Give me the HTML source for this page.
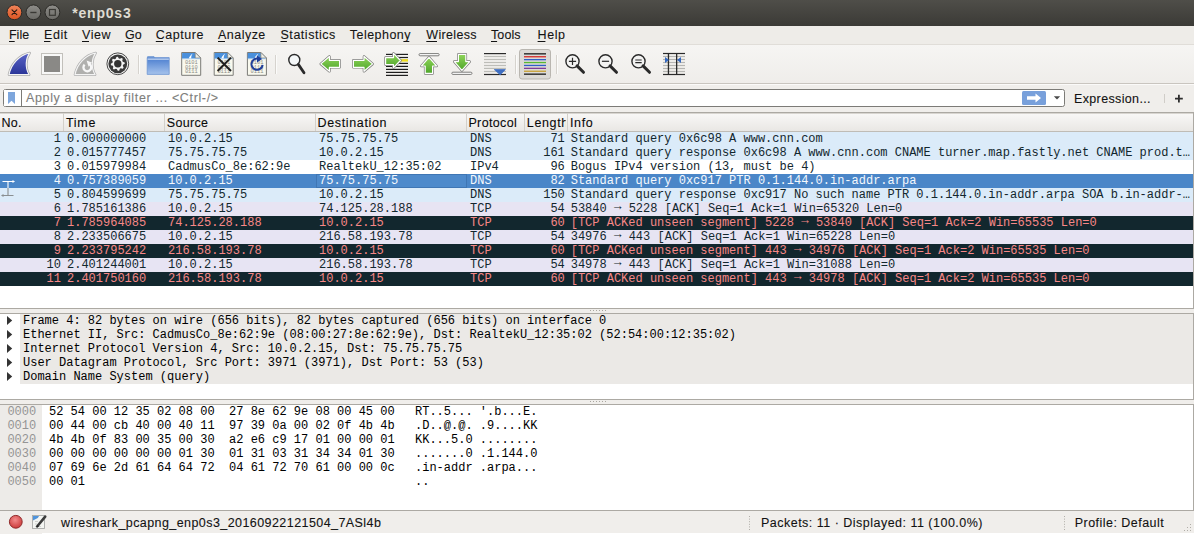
<!DOCTYPE html>
<html><head><meta charset="utf-8"><title>enp0s3</title>
<style>html,body{margin:0;padding:0;width:1194px;height:534px;overflow:hidden;background:#f0eeeb;font-family:"Liberation Sans", sans-serif;}</style>
</head><body><svg width="1194" height="534" viewBox="0 0 1194 534" style="display:block"><defs><linearGradient id="tb" x1="0" y1="0" x2="0" y2="1"><stop offset="0" stop-color="#4f4e49"/><stop offset="1" stop-color="#3b3a36"/></linearGradient><linearGradient id="hdr" x1="0" y1="0" x2="0" y2="1"><stop offset="0" stop-color="#f9f8f7"/><stop offset="1" stop-color="#e9e7e4"/></linearGradient><linearGradient id="closeg" x1="0" y1="0" x2="0" y2="1"><stop offset="0" stop-color="#f0845a"/><stop offset="1" stop-color="#dc5522"/></linearGradient><linearGradient id="btng" x1="0" y1="0" x2="0" y2="1"><stop offset="0" stop-color="#8e8d89"/><stop offset="1" stop-color="#6b6a66"/></linearGradient><radialGradient id="redg" cx="0.45" cy="0.35" r="0.65"><stop offset="0" stop-color="#f28b8b"/><stop offset="1" stop-color="#cc3b3b"/></radialGradient><linearGradient id="fin" x1="0" y1="0" x2="0" y2="1"><stop offset="0" stop-color="#5a64c8"/><stop offset="1" stop-color="#2a3598"/></linearGradient><linearGradient id="fold" x1="0" y1="0" x2="0" y2="1"><stop offset="0" stop-color="#4a7dcf"/><stop offset="1" stop-color="#a6c3ec"/></linearGradient><linearGradient id="green" x1="0" y1="0" x2="0" y2="1"><stop offset="0" stop-color="#8fd45a"/><stop offset="1" stop-color="#4ea52a"/></linearGradient><linearGradient id="tbar" x1="0" y1="0" x2="0" y2="1"><stop offset="0" stop-color="#f6f5f3"/><stop offset="1" stop-color="#efedea"/></linearGradient><clipPath id="infoclip"><rect x="567" y="132" width="624" height="160"/></clipPath><clipPath id="lenclip"><rect x="524" y="113" width="41.6" height="18"/></clipPath></defs><rect x="0" y="0" width="1194" height="534" fill="#f0eeeb" /><rect x="0" y="0" width="1194" height="26" fill="url(#tb)" /><circle cx="14.4" cy="12.3" r="7.4" fill="url(#closeg)" stroke="#2b2a27" stroke-width="1"/><path d="M12 9.9 L16.8 14.7 M16.8 9.9 L12 14.7" stroke="#2a1a12" stroke-width="1.1" stroke-linecap="round"/><circle cx="33.4" cy="12.3" r="7.4" fill="url(#btng)" stroke="#2b2a27" stroke-width="1"/><path d="M30.3 12.5 H36.5" stroke="#3a3935" stroke-width="1.4"/><circle cx="52.4" cy="12.3" r="7.4" fill="url(#btng)" stroke="#2b2a27" stroke-width="1"/><rect x="49.5" y="9.5" width="5.8" height="5.8" fill="none" stroke="#3a3935" stroke-width="1.2"/><text x="72.2" y="17.8" font-family='"Liberation Sans", sans-serif' font-size="14" font-weight="bold" fill="#dfdbd2" textLength="58.5" lengthAdjust="spacing" >*enp0s3</text><rect x="0" y="26" width="1194" height="18" fill="#eeece8" /><rect x="0" y="44" width="1194" height="1" fill="#e0ddd8" /><rect x="0" y="45" width="1194" height="38" fill="url(#tbar)" /><text x="9" y="38.8" font-family='"Liberation Sans", sans-serif' font-size="12.5" fill="#141414" stroke="#141414" stroke-width="0.1" textLength="20.1" lengthAdjust="spacing" >File</text><rect x="9.0" y="41" width="5.7" height="1" fill="#141414" /><text x="44" y="38.8" font-family='"Liberation Sans", sans-serif' font-size="12.5" fill="#141414" stroke="#141414" stroke-width="0.1" textLength="23.2" lengthAdjust="spacing" >Edit</text><rect x="44.0" y="41" width="6.4" height="1" fill="#141414" /><text x="82" y="38.8" font-family='"Liberation Sans", sans-serif' font-size="12.5" fill="#141414" stroke="#141414" stroke-width="0.1" textLength="28.5" lengthAdjust="spacing" >View</text><rect x="82.0" y="41" width="7.0" height="1" fill="#141414" /><text x="125" y="38.8" font-family='"Liberation Sans", sans-serif' font-size="12.5" fill="#141414" stroke="#141414" stroke-width="0.1" textLength="16.6" lengthAdjust="spacing" >Go</text><rect x="125.0" y="41" width="8.1" height="1" fill="#141414" /><text x="155.8" y="38.8" font-family='"Liberation Sans", sans-serif' font-size="12.5" fill="#141414" stroke="#141414" stroke-width="0.1" textLength="47.7" lengthAdjust="spacing" >Capture</text><rect x="155.8" y="41" width="7.2" height="1" fill="#141414" /><text x="218" y="38.8" font-family='"Liberation Sans", sans-serif' font-size="12.5" fill="#141414" stroke="#141414" stroke-width="0.1" textLength="47.3" lengthAdjust="spacing" >Analyze</text><rect x="218.0" y="41" width="7.0" height="1" fill="#141414" /><text x="280.5" y="38.8" font-family='"Liberation Sans", sans-serif' font-size="12.5" fill="#141414" stroke="#141414" stroke-width="0.1" textLength="54.8" lengthAdjust="spacing" >Statistics</text><rect x="280.5" y="41" width="6.4" height="1" fill="#141414" /><text x="349.8" y="38.8" font-family='"Liberation Sans", sans-serif' font-size="12.5" fill="#141414" stroke="#141414" stroke-width="0.1" textLength="60.7" lengthAdjust="spacing" >Telephony</text><rect x="403.4" y="41" width="5.9" height="1" fill="#141414" /><text x="426.3" y="38.8" font-family='"Liberation Sans", sans-serif' font-size="12.5" fill="#141414" stroke="#141414" stroke-width="0.1" textLength="50.2" lengthAdjust="spacing" >Wireless</text><rect x="426.3" y="41" width="10.7" height="1" fill="#141414" /><text x="491" y="38.8" font-family='"Liberation Sans", sans-serif' font-size="12.5" fill="#141414" stroke="#141414" stroke-width="0.1" textLength="29.6" lengthAdjust="spacing" >Tools</text><rect x="491.0" y="41" width="6.1" height="1" fill="#141414" /><text x="537.6" y="38.8" font-family='"Liberation Sans", sans-serif' font-size="12.5" fill="#141414" stroke="#141414" stroke-width="0.1" textLength="27.4" lengthAdjust="spacing" >Help</text><rect x="537.6" y="41" width="7.8" height="1" fill="#141414" /><rect x="0" y="83" width="1194" height="1" fill="#c9c5bf" /><rect x="0" y="84" width="1194" height="1" fill="#fbfaf9" /><path d="M9 74.6 C 11.2 64, 19.2 55.2, 29.6 53 C 25.6 58.5, 24.9 68, 29.1 74.6 Z" fill="#d0d0d0" stroke="#a9a9a9" stroke-width="2.6" stroke-linejoin="round"/><path d="M9 74.6 C 11.2 64, 19.2 55.2, 29.6 53 C 25.6 58.5, 24.9 68, 29.1 74.6 Z" fill="url(#fin)" stroke="#f4f4f4" stroke-width="1.2" stroke-linejoin="round"/><rect x="41.5" y="53.5" width="21" height="21" fill="#f8f8f7" stroke="#c2c0bb" stroke-width="1"/><rect x="44" y="56" width="16" height="16" fill="#8a8986" /><path d="M75 74.6 C 77.2 64, 85.2 55.2, 95.6 53 C 91.6 58.5, 90.9 68, 95.1 74.6 Z" fill="#d0d0d0" stroke="#b0b0b0" stroke-width="2.6" stroke-linejoin="round"/><path d="M75 74.6 C 77.2 64, 85.2 55.2, 95.6 53 C 91.6 58.5, 90.9 68, 95.1 74.6 Z" fill="#b0b0ae" stroke="#f4f4f4" stroke-width="1.2" stroke-linejoin="round"/><path d="M84.6 64.6 A 3.9 3.9 0 1 0 89.6 64.2" fill="none" stroke="#f7f7f7" stroke-width="2.3"/><path d="M86.6 60.6 L91.8 62.4 L88.6 66.8 Z" fill="#f7f7f7"/><circle cx="117.8" cy="63.8" r="10.9" fill="#f2f2f1" stroke="#4a4a4a" stroke-width="1"/><circle cx="117.8" cy="63.8" r="9.4" fill="#3a3a3a"/><polygon points="124.67,62.43 124.80,63.80 123.10,64.85 122.79,65.87 123.62,67.69 122.75,68.75 120.80,68.29 119.87,68.79 119.17,70.67 117.80,70.80 116.75,69.10 115.73,68.79 113.91,69.62 112.85,68.75 113.31,66.80 112.81,65.87 110.93,65.17 110.80,63.80 112.50,62.75 112.81,61.73 111.98,59.91 112.85,58.85 114.80,59.31 115.73,58.81 116.43,56.93 117.80,56.80 118.85,58.50 119.87,58.81 121.69,57.98 122.75,58.85 122.29,60.80 122.79,61.73" fill="#f4f4f4"/><circle cx="117.8" cy="63.8" r="3.7" fill="#333333"/><rect x="138" y="55" width="1" height="19" fill="#d6d3ce" /><rect x="139" y="55" width="1" height="19" fill="#fbfbfa" /><path d="M147.6 56.6 h6.4 l1 1.2 v1.5 h-7.4 z" fill="#7aa2dc" stroke="#6b93cf" stroke-width="0.7"/><path d="M147.2 57.6 h22 v16.8 h-22 z" fill="url(#fold)" stroke="#6d95d2" stroke-width="0.8"/><rect x="147.6" y="58.6" width="21.2" height="1" fill="#e8f0fb" /><path d="M181.7 52.5 h13.5 l5.5 5.5 v17.3 h-19 z" fill="#f9f9ee" stroke="#7b7b77" stroke-width="1"/><path d="M182.2 53.0 h13 l4.6 4.6 v1.2 h-17.9 z" fill="#4a90dc"/><path d="M188.7 58.8 c0.8 -2.2 2.2 -4.2 4 -5.2 c-1.2 1.6 -1.6 3.3 -1.4 5.2 z" fill="#ffffff"/><path d="M195.2 52.5 v5.5 h5.5 z" fill="#eeeee6" stroke="#7b7b77" stroke-width="0.7"/><path d="M182.2 58.8 h18" stroke="#b5d2f0" stroke-width="0.8"/><text x="184.89999999999998" y="64.1" font-family="Liberation Mono" font-size="5.4" fill="#8c8c88" letter-spacing="-0.05">0101</text><text x="184.89999999999998" y="68.5" font-family="Liberation Mono" font-size="5.4" fill="#8c8c88" letter-spacing="-0.05">0110</text><text x="184.89999999999998" y="72.9" font-family="Liberation Mono" font-size="5.4" fill="#8c8c88" letter-spacing="-0.05">0111</text><path d="M214.2 52.5 h13.5 l5.5 5.5 v17.3 h-19 z" fill="#f9f9ee" stroke="#7b7b77" stroke-width="1"/><path d="M214.7 53.0 h13 l4.6 4.6 v1.2 h-17.9 z" fill="#4a90dc"/><path d="M221.2 58.8 c0.8 -2.2 2.2 -4.2 4 -5.2 c-1.2 1.6 -1.6 3.3 -1.4 5.2 z" fill="#ffffff"/><path d="M227.7 52.5 v5.5 h5.5 z" fill="#eeeee6" stroke="#7b7b77" stroke-width="0.7"/><path d="M214.7 58.8 h18" stroke="#b5d2f0" stroke-width="0.8"/><text x="217.39999999999998" y="64.1" font-family="Liberation Mono" font-size="5.4" fill="#8c8c88" letter-spacing="-0.05">0101</text><text x="217.39999999999998" y="68.5" font-family="Liberation Mono" font-size="5.4" fill="#8c8c88" letter-spacing="-0.05">0110</text><text x="217.39999999999998" y="72.9" font-family="Liberation Mono" font-size="5.4" fill="#8c8c88" letter-spacing="-0.05">0111</text><path d="M217.6 57.6 L231 71 M231 57.6 L217.6 71" stroke="#1e1e1e" stroke-width="2"/><path d="M247.4 52.5 h13.5 l5.5 5.5 v17.3 h-19 z" fill="#f9f9ee" stroke="#7b7b77" stroke-width="1"/><path d="M247.9 53.0 h13 l4.6 4.6 v1.2 h-17.9 z" fill="#4a90dc"/><path d="M254.4 58.8 c0.8 -2.2 2.2 -4.2 4 -5.2 c-1.2 1.6 -1.6 3.3 -1.4 5.2 z" fill="#ffffff"/><path d="M260.9 52.5 v5.5 h5.5 z" fill="#eeeee6" stroke="#7b7b77" stroke-width="0.7"/><path d="M247.9 58.8 h18" stroke="#b5d2f0" stroke-width="0.8"/><text x="250.6" y="64.1" font-family="Liberation Mono" font-size="5.4" fill="#8c8c88" letter-spacing="-0.05">0101</text><text x="250.6" y="68.5" font-family="Liberation Mono" font-size="5.4" fill="#8c8c88" letter-spacing="-0.05">0110</text><text x="250.6" y="72.9" font-family="Liberation Mono" font-size="5.4" fill="#8c8c88" letter-spacing="-0.05">0111</text><path d="M262.6 64.8 A 5.6 5.6 0 1 1 258.6 58.8" fill="none" stroke="#1f3f9a" stroke-width="2"/><path d="M256.8 55.6 L262.2 58.9 L257 62.4 Z" fill="#1f3f9a"/><rect x="275" y="55" width="1" height="19" fill="#d6d3ce" /><rect x="276" y="55" width="1" height="19" fill="#fbfbfa" /><circle cx="294.3" cy="60" r="5.5" fill="#f4f7f8" stroke="#2a2a2a" stroke-width="1.4"/><path d="M298.3 64.4 L304 72.8" stroke="#2a2a2a" stroke-width="2.8" stroke-linecap="round"/><path d="M320.8 63.9 L329.4 56.5 V60.3 H339.6 V67.3 H329.4 V71.3 Z" fill="url(#green)" stroke="#7d7d7b" stroke-width="2.6" stroke-linejoin="round"/><path d="M320.8 63.9 L329.4 56.5 V60.3 H339.6 V67.3 H329.4 V71.3 Z" fill="url(#green)" stroke="#ffffff" stroke-width="1.2" stroke-linejoin="round"/><path d="M372.6 63.9 L364 56.5 V60.3 H353.4 V67.3 H364 V71.3 Z" fill="url(#green)" stroke="#7d7d7b" stroke-width="2.6" stroke-linejoin="round"/><path d="M372.6 63.9 L364 56.5 V60.3 H353.4 V67.3 H364 V71.3 Z" fill="url(#green)" stroke="#ffffff" stroke-width="1.2" stroke-linejoin="round"/><rect x="386" y="53.8" width="22" height="1.2" fill="#1e1e1e" /><rect x="386" y="56.9" width="22" height="1.2" fill="#1e1e1e" /><rect x="386" y="59.8" width="22" height="1.2" fill="#1e1e1e" /><rect x="386" y="62.8" width="22" height="1.2" fill="#1e1e1e" /><rect x="386" y="65.8" width="22" height="1.2" fill="#1e1e1e" /><rect x="386" y="68.8" width="22" height="1.2" fill="#1e1e1e" /><rect x="386" y="71.8" width="22" height="1.2" fill="#1e1e1e" /><rect x="386" y="74.8" width="22" height="1.2" fill="#1e1e1e" /><rect x="401" y="59.2" width="7" height="2.4" fill="#f1de20" /><path d="M400.4 60.5 L393.5 53.4 V57.6 H385.6 V64.6 H393.5 V67.6 Z" fill="url(#green)" stroke="#7d7d7b" stroke-width="2.6" stroke-linejoin="round"/><path d="M400.4 60.5 L393.5 53.4 V57.6 H385.6 V64.6 H393.5 V67.6 Z" fill="url(#green)" stroke="#ffffff" stroke-width="1.2" stroke-linejoin="round"/><rect x="419" y="53.6" width="20.2" height="2.2" rx="1.1" fill="#ffffff" stroke="#7d7d7b" stroke-width="1"/><path d="M429 57.4 L436.6 66 H432.6 V73.4 H425.2 V66 H421.4 Z" fill="url(#green)" stroke="#7d7d7b" stroke-width="2.6" stroke-linejoin="round"/><path d="M429 57.4 L436.6 66 H432.6 V73.4 H425.2 V66 H421.4 Z" fill="url(#green)" stroke="#ffffff" stroke-width="1.2" stroke-linejoin="round"/><rect x="451.8" y="72.2" width="20.2" height="2.2" rx="1.1" fill="#ffffff" stroke="#7d7d7b" stroke-width="1"/><path d="M461.9 70.4 L469.7 61.6 H465.8 V54.4 H458.4 V61.6 H454.3 Z" fill="url(#green)" stroke="#7d7d7b" stroke-width="2.6" stroke-linejoin="round"/><path d="M461.9 70.4 L469.7 61.6 H465.8 V54.4 H458.4 V61.6 H454.3 Z" fill="url(#green)" stroke="#ffffff" stroke-width="1.2" stroke-linejoin="round"/><rect x="484" y="53.0" width="22" height="1.2" fill="#2a2a2a" /><rect x="484" y="55.9" width="22" height="1.2" fill="#bdbdb8" /><rect x="484" y="58.9" width="22" height="1.2" fill="#bdbdb8" /><rect x="484" y="61.9" width="22" height="1.2" fill="#bdbdb8" /><rect x="484" y="64.9" width="22" height="1.2" fill="#bdbdb8" /><rect x="484" y="67.8" width="22" height="1.2" fill="#bdbdb8" /><rect x="484" y="70.9" width="22" height="1.2" fill="#bdbdb8" /><rect x="484" y="73.9" width="22" height="1.2" fill="#2a2a2a" /><path d="M494.3 69.6 H505.3 L500.2 74.8 Z" fill="#3f6fc2" stroke="#3f6fc2" stroke-width="0.8" stroke-linejoin="round"/><rect x="515" y="55" width="1" height="19" fill="#d6d3ce" /><rect x="516" y="55" width="1" height="19" fill="#fbfbfa" /><rect x="519.5" y="49.5" width="31" height="29.5" rx="2.5" fill="#dcdad6" stroke="#b9b6b0" stroke-width="1"/><rect x="524" y="53.2" width="22" height="1.3" fill="#1b1b1b" /><rect x="524" y="56.1" width="22" height="1.3" fill="#d42a2a" /><rect x="524" y="59.0" width="22" height="1.3" fill="#2f5fc9" /><rect x="524" y="61.9" width="22" height="1.3" fill="#58b832" /><rect x="524" y="64.8" width="22" height="1.3" fill="#2f5fc9" /><rect x="524" y="67.7" width="22" height="1.3" fill="#7f3c9a" /><rect x="524" y="70.6" width="22" height="1.3" fill="#c8a032" /><rect x="524" y="73.5" width="22" height="1.3" fill="#1b1b1b" /><rect x="556" y="55" width="1" height="19" fill="#d6d3ce" /><rect x="557" y="55" width="1" height="19" fill="#fbfbfa" /><circle cx="572.5" cy="61.3" r="6.6" fill="#f3f3f2" stroke="#2a2a2a" stroke-width="1.4"/><path d="M577.1 65.89999999999999 L583.5 72.3" stroke="#2a2a2a" stroke-width="3" stroke-linecap="round"/><path d="M568.9 61.3 H576.1 M572.5 57.699999999999996 V64.89999999999999" stroke="#2a2a2a" stroke-width="1.2"/><circle cx="605.5" cy="61.3" r="6.6" fill="#f3f3f2" stroke="#2a2a2a" stroke-width="1.4"/><path d="M610.1 65.89999999999999 L616.5 72.3" stroke="#2a2a2a" stroke-width="3" stroke-linecap="round"/><path d="M601.9 61.3 H609.1" stroke="#2a2a2a" stroke-width="1.2"/><circle cx="638.5" cy="61.3" r="6.6" fill="#f3f3f2" stroke="#2a2a2a" stroke-width="1.4"/><path d="M643.1 65.89999999999999 L649.5 72.3" stroke="#2a2a2a" stroke-width="3" stroke-linecap="round"/><path d="M635.3 60.0 H641.7 M635.3 62.599999999999994 H641.7" stroke="#2a2a2a" stroke-width="1.1"/><rect x="663" y="52.9" width="22" height="1.2" fill="#2a2a2a" /><rect x="663" y="55.9" width="22" height="1.2" fill="#b5b5b2" /><rect x="663" y="58.9" width="22" height="1.2" fill="#b5b5b2" /><rect x="663" y="61.9" width="22" height="1.2" fill="#b5b5b2" /><rect x="663" y="64.9" width="22" height="1.2" fill="#b5b5b2" /><rect x="663" y="67.9" width="22" height="1.2" fill="#b5b5b2" /><rect x="663" y="70.9" width="22" height="1.2" fill="#b5b5b2" /><rect x="663" y="73.9" width="22" height="1.2" fill="#2a2a2a" /><rect x="667.8" y="53" width="1.3" height="22" fill="#2a2a2a" /><rect x="676" y="53" width="1.3" height="22" fill="#2a2a2a" /><path d="M665 57 L669 60 L665 63 Z" fill="#3468c0"/><path d="M681 57 L677 60 L681 63 Z" fill="#3468c0"/><rect x="3.5" y="89.5" width="1061" height="17" rx="2" fill="#ffffff" stroke="#7c7b77" stroke-width="1"/><rect x="4" y="90" width="17" height="16" fill="#ffffff" /><rect x="21" y="90" width="1" height="16" fill="#7c7b77" /><path d="M8 92 H15 V104 L11.5 100.8 L8 104 Z" fill="#7ea6dc"/><text x="26" y="101.7" font-family='"Liberation Sans", sans-serif' font-size="12.5" fill="#7e7e7c" stroke="#7e7e7c" stroke-width="0.1" textLength="192.1" lengthAdjust="spacing" >Apply a display filter ... &lt;Ctrl-/&gt;</text><rect x="1022" y="91" width="24" height="14" rx="1.5" fill="#78a0db"/><path d="M1027 96.2 H1035.5 V93.4 L1041 98 L1035.5 102.6 V99.8 H1027 Z" fill="#ffffff"/><path d="M1053.8 96.2 H1060.2 L1057 99.6 Z" fill="#4a4a4a"/><text x="1074" y="102.5" font-family='"Liberation Sans", sans-serif' font-size="12.5" fill="#121212" stroke="#121212" stroke-width="0.1" textLength="76.6" lengthAdjust="spacing" >Expression...</text><rect x="1164" y="94" width="1" height="9" fill="#d0cdc8" /><path d="M1178.9 94.8 V102.6 M1175 98.7 H1182.8" stroke="#2e2e2e" stroke-width="1.8"/><rect x="0" y="112" width="1194" height="1" fill="#aca9a3" /><rect x="1193" y="112" width="1" height="197" fill="#aca9a3" /><rect x="0" y="113" width="1193" height="18" fill="url(#hdr)" /><rect x="0" y="113" width="1193" height="1" fill="#d8d5d0" /><rect x="0" y="131" width="1193" height="1" fill="#bfbcb6" /><rect x="0" y="132" width="1193" height="176" fill="#ffffff" /><rect x="0" y="308" width="1194" height="1" fill="#aca9a3" /><rect x="63" y="113" width="1" height="18" fill="#d3d0ca" /><rect x="164" y="113" width="1" height="18" fill="#d3d0ca" /><rect x="315" y="113" width="1" height="18" fill="#d3d0ca" /><rect x="466" y="113" width="1" height="18" fill="#d3d0ca" /><rect x="524" y="113" width="1" height="18" fill="#d3d0ca" /><rect x="567" y="113" width="1" height="18" fill="#d3d0ca" /><text x="1.5" y="127" font-family='"Liberation Sans", sans-serif' font-size="12.5" fill="#0a0a0a" stroke="#0a0a0a" stroke-width="0.1" textLength="19.9" lengthAdjust="spacing" >No.</text><text x="66" y="127" font-family='"Liberation Sans", sans-serif' font-size="12.5" fill="#0a0a0a" stroke="#0a0a0a" stroke-width="0.1" textLength="29.4" lengthAdjust="spacing" >Time</text><text x="166.8" y="127" font-family='"Liberation Sans", sans-serif' font-size="12.5" fill="#0a0a0a" stroke="#0a0a0a" stroke-width="0.1" textLength="41.2" lengthAdjust="spacing" >Source</text><text x="317.6" y="127" font-family='"Liberation Sans", sans-serif' font-size="12.5" fill="#0a0a0a" stroke="#0a0a0a" stroke-width="0.1" textLength="68.9" lengthAdjust="spacing" >Destination</text><text x="468.4" y="127" font-family='"Liberation Sans", sans-serif' font-size="12.5" fill="#0a0a0a" stroke="#0a0a0a" stroke-width="0.1" textLength="48.4" lengthAdjust="spacing" >Protocol</text><text x="570" y="127" font-family='"Liberation Sans", sans-serif' font-size="12.5" fill="#0a0a0a" stroke="#0a0a0a" stroke-width="0.1" textLength="22.7" lengthAdjust="spacing" >Info</text><text x="526.8" y="127" font-family='"Liberation Sans", sans-serif' font-size="12.5" fill="#0a0a0a" stroke="#0a0a0a" stroke-width="0.1" textLength="41.4" lengthAdjust="spacing" clip-path="url(#lenclip)">Length</text><rect x="0" y="132" width="1193" height="14" fill="#dbebf9" /><text x="61" y="142.2" font-family='"Liberation Mono", monospace' font-size="12" fill="#12272e" text-anchor="end" xml:space="preserve">1</text><text x="67" y="142.2" font-family='"Liberation Mono", monospace' font-size="12" fill="#12272e" xml:space="preserve">0.000000000</text><text x="168" y="142.2" font-family='"Liberation Mono", monospace' font-size="12" fill="#12272e" xml:space="preserve">10.0.2.15</text><text x="319" y="142.2" font-family='"Liberation Mono", monospace' font-size="12" fill="#12272e" xml:space="preserve">75.75.75.75</text><text x="470" y="142.2" font-family='"Liberation Mono", monospace' font-size="12" fill="#12272e" xml:space="preserve">DNS</text><text x="564.8" y="142.2" font-family='"Liberation Mono", monospace' font-size="12" fill="#12272e" text-anchor="end" xml:space="preserve">71</text><text x="570.7" y="142.2" font-family='"Liberation Mono", monospace' font-size="12" fill="#12272e" clip-path="url(#infoclip)" xml:space="preserve">Standard query 0x6c98 A www.cnn.com</text><rect x="0" y="146" width="1193" height="14" fill="#dbebf9" /><text x="61" y="156.2" font-family='"Liberation Mono", monospace' font-size="12" fill="#12272e" text-anchor="end" xml:space="preserve">2</text><text x="67" y="156.2" font-family='"Liberation Mono", monospace' font-size="12" fill="#12272e" xml:space="preserve">0.015777457</text><text x="168" y="156.2" font-family='"Liberation Mono", monospace' font-size="12" fill="#12272e" xml:space="preserve">75.75.75.75</text><text x="319" y="156.2" font-family='"Liberation Mono", monospace' font-size="12" fill="#12272e" xml:space="preserve">10.0.2.15</text><text x="470" y="156.2" font-family='"Liberation Mono", monospace' font-size="12" fill="#12272e" xml:space="preserve">DNS</text><text x="564.8" y="156.2" font-family='"Liberation Mono", monospace' font-size="12" fill="#12272e" text-anchor="end" xml:space="preserve">161</text><text x="570.7" y="156.2" font-family='"Liberation Mono", monospace' font-size="12" fill="#12272e" clip-path="url(#infoclip)" xml:space="preserve">Standard query response 0x6c98 A www.cnn.com CNAME turner.map.fastly.net CNAME prod.t…</text><rect x="0" y="160" width="1193" height="14" fill="#ffffff" /><text x="61" y="170.2" font-family='"Liberation Mono", monospace' font-size="12" fill="#12272e" text-anchor="end" xml:space="preserve">3</text><text x="67" y="170.2" font-family='"Liberation Mono", monospace' font-size="12" fill="#12272e" xml:space="preserve">0.015979984</text><text x="168" y="170.2" font-family='"Liberation Mono", monospace' font-size="12" fill="#12272e" xml:space="preserve">CadmusCo_8e:62:9e</text><text x="319" y="170.2" font-family='"Liberation Mono", monospace' font-size="12" fill="#12272e" xml:space="preserve">RealtekU_12:35:02</text><text x="470" y="170.2" font-family='"Liberation Mono", monospace' font-size="12" fill="#12272e" xml:space="preserve">IPv4</text><text x="564.8" y="170.2" font-family='"Liberation Mono", monospace' font-size="12" fill="#12272e" text-anchor="end" xml:space="preserve">96</text><text x="570.7" y="170.2" font-family='"Liberation Mono", monospace' font-size="12" fill="#12272e" clip-path="url(#infoclip)" xml:space="preserve">Bogus IPv4 version (13, must be 4)</text><rect x="0" y="174" width="1193" height="14" fill="#4a86c8" /><rect x="316.5" y="174.5" width="150" height="13" fill="#4e8acb" stroke="#3f76b4" stroke-width="1"/><text x="61" y="184.2" font-family='"Liberation Mono", monospace' font-size="12" fill="#f4f8fd" text-anchor="end" xml:space="preserve">4</text><text x="67" y="184.2" font-family='"Liberation Mono", monospace' font-size="12" fill="#f4f8fd" xml:space="preserve">0.757389059</text><text x="168" y="184.2" font-family='"Liberation Mono", monospace' font-size="12" fill="#f4f8fd" xml:space="preserve">10.0.2.15</text><text x="319" y="184.2" font-family='"Liberation Mono", monospace' font-size="12" fill="#f4f8fd" xml:space="preserve">75.75.75.75</text><text x="470" y="184.2" font-family='"Liberation Mono", monospace' font-size="12" fill="#f4f8fd" xml:space="preserve">DNS</text><text x="564.8" y="184.2" font-family='"Liberation Mono", monospace' font-size="12" fill="#f4f8fd" text-anchor="end" xml:space="preserve">82</text><text x="570.7" y="184.2" font-family='"Liberation Mono", monospace' font-size="12" fill="#f4f8fd" clip-path="url(#infoclip)" xml:space="preserve">Standard query 0xc917 PTR 0.1.144.0.in-addr.arpa</text><rect x="0" y="188" width="1193" height="14" fill="#dbebf9" /><text x="61" y="198.2" font-family='"Liberation Mono", monospace' font-size="12" fill="#12272e" text-anchor="end" xml:space="preserve">5</text><text x="67" y="198.2" font-family='"Liberation Mono", monospace' font-size="12" fill="#12272e" xml:space="preserve">0.804599699</text><text x="168" y="198.2" font-family='"Liberation Mono", monospace' font-size="12" fill="#12272e" xml:space="preserve">75.75.75.75</text><text x="319" y="198.2" font-family='"Liberation Mono", monospace' font-size="12" fill="#12272e" xml:space="preserve">10.0.2.15</text><text x="470" y="198.2" font-family='"Liberation Mono", monospace' font-size="12" fill="#12272e" xml:space="preserve">DNS</text><text x="564.8" y="198.2" font-family='"Liberation Mono", monospace' font-size="12" fill="#12272e" text-anchor="end" xml:space="preserve">150</text><text x="570.7" y="198.2" font-family='"Liberation Mono", monospace' font-size="12" fill="#12272e" clip-path="url(#infoclip)" xml:space="preserve">Standard query response 0xc917 No such name PTR 0.1.144.0.in-addr.arpa SOA b.in-addr-…</text><rect x="0" y="202" width="1193" height="14" fill="#e7e4f3" /><text x="61" y="212.2" font-family='"Liberation Mono", monospace' font-size="12" fill="#12272e" text-anchor="end" xml:space="preserve">6</text><text x="67" y="212.2" font-family='"Liberation Mono", monospace' font-size="12" fill="#12272e" xml:space="preserve">1.785161386</text><text x="168" y="212.2" font-family='"Liberation Mono", monospace' font-size="12" fill="#12272e" xml:space="preserve">10.0.2.15</text><text x="319" y="212.2" font-family='"Liberation Mono", monospace' font-size="12" fill="#12272e" xml:space="preserve">74.125.28.188</text><text x="470" y="212.2" font-family='"Liberation Mono", monospace' font-size="12" fill="#12272e" xml:space="preserve">TCP</text><text x="564.8" y="212.2" font-family='"Liberation Mono", monospace' font-size="12" fill="#12272e" text-anchor="end" xml:space="preserve">54</text><text x="570.7" y="212.2" font-family='"Liberation Mono", monospace' font-size="12" fill="#12272e" clip-path="url(#infoclip)" xml:space="preserve">53840 <tspan dy="-2" font-size="12.6">→</tspan><tspan dy="2"> 5228 [ACK] Seq=1 Ack=1 Win=65320 Len=0</tspan></text><rect x="0" y="216" width="1193" height="14" fill="#12272e" /><text x="61" y="226.2" font-family='"Liberation Mono", monospace' font-size="12" fill="#f78787" text-anchor="end" xml:space="preserve">7</text><text x="67" y="226.2" font-family='"Liberation Mono", monospace' font-size="12" fill="#f78787" xml:space="preserve">1.785964085</text><text x="168" y="226.2" font-family='"Liberation Mono", monospace' font-size="12" fill="#f78787" xml:space="preserve">74.125.28.188</text><text x="319" y="226.2" font-family='"Liberation Mono", monospace' font-size="12" fill="#f78787" xml:space="preserve">10.0.2.15</text><text x="470" y="226.2" font-family='"Liberation Mono", monospace' font-size="12" fill="#f78787" xml:space="preserve">TCP</text><text x="564.8" y="226.2" font-family='"Liberation Mono", monospace' font-size="12" fill="#f78787" text-anchor="end" xml:space="preserve">60</text><text x="570.7" y="226.2" font-family='"Liberation Mono", monospace' font-size="12" fill="#f78787" clip-path="url(#infoclip)" xml:space="preserve">[TCP ACKed unseen segment] 5228 <tspan dy="-2" font-size="12.6">→</tspan><tspan dy="2"> 53840 [ACK] Seq=1 Ack=2 Win=65535 Len=0</tspan></text><rect x="0" y="230" width="1193" height="14" fill="#e7e4f3" /><text x="61" y="240.2" font-family='"Liberation Mono", monospace' font-size="12" fill="#12272e" text-anchor="end" xml:space="preserve">8</text><text x="67" y="240.2" font-family='"Liberation Mono", monospace' font-size="12" fill="#12272e" xml:space="preserve">2.233506675</text><text x="168" y="240.2" font-family='"Liberation Mono", monospace' font-size="12" fill="#12272e" xml:space="preserve">10.0.2.15</text><text x="319" y="240.2" font-family='"Liberation Mono", monospace' font-size="12" fill="#12272e" xml:space="preserve">216.58.193.78</text><text x="470" y="240.2" font-family='"Liberation Mono", monospace' font-size="12" fill="#12272e" xml:space="preserve">TCP</text><text x="564.8" y="240.2" font-family='"Liberation Mono", monospace' font-size="12" fill="#12272e" text-anchor="end" xml:space="preserve">54</text><text x="570.7" y="240.2" font-family='"Liberation Mono", monospace' font-size="12" fill="#12272e" clip-path="url(#infoclip)" xml:space="preserve">34976 <tspan dy="-2" font-size="12.6">→</tspan><tspan dy="2"> 443 [ACK] Seq=1 Ack=1 Win=65228 Len=0</tspan></text><rect x="0" y="244" width="1193" height="14" fill="#12272e" /><text x="61" y="254.2" font-family='"Liberation Mono", monospace' font-size="12" fill="#f78787" text-anchor="end" xml:space="preserve">9</text><text x="67" y="254.2" font-family='"Liberation Mono", monospace' font-size="12" fill="#f78787" xml:space="preserve">2.233795242</text><text x="168" y="254.2" font-family='"Liberation Mono", monospace' font-size="12" fill="#f78787" xml:space="preserve">216.58.193.78</text><text x="319" y="254.2" font-family='"Liberation Mono", monospace' font-size="12" fill="#f78787" xml:space="preserve">10.0.2.15</text><text x="470" y="254.2" font-family='"Liberation Mono", monospace' font-size="12" fill="#f78787" xml:space="preserve">TCP</text><text x="564.8" y="254.2" font-family='"Liberation Mono", monospace' font-size="12" fill="#f78787" text-anchor="end" xml:space="preserve">60</text><text x="570.7" y="254.2" font-family='"Liberation Mono", monospace' font-size="12" fill="#f78787" clip-path="url(#infoclip)" xml:space="preserve">[TCP ACKed unseen segment] 443 <tspan dy="-2" font-size="12.6">→</tspan><tspan dy="2"> 34976 [ACK] Seq=1 Ack=2 Win=65535 Len=0</tspan></text><rect x="0" y="258" width="1193" height="14" fill="#e7e4f3" /><text x="61" y="268.2" font-family='"Liberation Mono", monospace' font-size="12" fill="#12272e" text-anchor="end" xml:space="preserve">10</text><text x="67" y="268.2" font-family='"Liberation Mono", monospace' font-size="12" fill="#12272e" xml:space="preserve">2.401244001</text><text x="168" y="268.2" font-family='"Liberation Mono", monospace' font-size="12" fill="#12272e" xml:space="preserve">10.0.2.15</text><text x="319" y="268.2" font-family='"Liberation Mono", monospace' font-size="12" fill="#12272e" xml:space="preserve">216.58.193.78</text><text x="470" y="268.2" font-family='"Liberation Mono", monospace' font-size="12" fill="#12272e" xml:space="preserve">TCP</text><text x="564.8" y="268.2" font-family='"Liberation Mono", monospace' font-size="12" fill="#12272e" text-anchor="end" xml:space="preserve">54</text><text x="570.7" y="268.2" font-family='"Liberation Mono", monospace' font-size="12" fill="#12272e" clip-path="url(#infoclip)" xml:space="preserve">34978 <tspan dy="-2" font-size="12.6">→</tspan><tspan dy="2"> 443 [ACK] Seq=1 Ack=1 Win=31088 Len=0</tspan></text><rect x="0" y="272" width="1193" height="14" fill="#12272e" /><text x="61" y="282.2" font-family='"Liberation Mono", monospace' font-size="12" fill="#f78787" text-anchor="end" xml:space="preserve">11</text><text x="67" y="282.2" font-family='"Liberation Mono", monospace' font-size="12" fill="#f78787" xml:space="preserve">2.401750160</text><text x="168" y="282.2" font-family='"Liberation Mono", monospace' font-size="12" fill="#f78787" xml:space="preserve">216.58.193.78</text><text x="319" y="282.2" font-family='"Liberation Mono", monospace' font-size="12" fill="#f78787" xml:space="preserve">10.0.2.15</text><text x="470" y="282.2" font-family='"Liberation Mono", monospace' font-size="12" fill="#f78787" xml:space="preserve">TCP</text><text x="564.8" y="282.2" font-family='"Liberation Mono", monospace' font-size="12" fill="#f78787" text-anchor="end" xml:space="preserve">60</text><text x="570.7" y="282.2" font-family='"Liberation Mono", monospace' font-size="12" fill="#f78787" clip-path="url(#infoclip)" xml:space="preserve">[TCP ACKed unseen segment] 443 <tspan dy="-2" font-size="12.6">→</tspan><tspan dy="2"> 34978 [ACK] Seq=1 Ack=2 Win=65535 Len=0</tspan></text><path d="M2 149.5 H13.5 M8 149.5 V160 M8 160 H2" stroke="#f4f8fd" stroke-width="0" /><path d="M8 188 V195.5 M3 195.5 H13.5" stroke="#8a8f92" stroke-width="1.1" fill="none"/><path d="M3.5 194 L1 195.5 L3.5 197 Z" fill="#8a8f92"/><path d="M2.5 181.5 H13 M8 181.5 V188" stroke="#ffffff" stroke-width="1.1" fill="none"/><path d="M12.5 180 L15 181.5 L12.5 183 Z" fill="#ffffff"/><rect x="0" y="309" width="1194" height="4" fill="#f0eeeb" /><rect x="590" y="310" width="1" height="1" fill="#a9a6a0" /><rect x="593" y="310" width="1" height="1" fill="#a9a6a0" /><rect x="596" y="310" width="1" height="1" fill="#a9a6a0" /><rect x="599" y="310" width="1" height="1" fill="#a9a6a0" /><rect x="602" y="310" width="1" height="1" fill="#a9a6a0" /><rect x="605" y="310" width="1" height="1" fill="#a9a6a0" /><rect x="0" y="313" width="1194" height="1" fill="#aca9a3" /><rect x="0" y="314" width="1193" height="85" fill="#ffffff" /><rect x="1193" y="313" width="1" height="87" fill="#aca9a3" /><rect x="20" y="314" width="1173" height="70" fill="#ebe9e6" /><path d="M7 316 L12.2 320.5 L7 325 Z" fill="#333333"/><text x="23.0" y="324" font-family='"Liberation Mono", monospace' font-size="12" fill="#000000" xml:space="preserve">Frame 4: 82 bytes on wire (656 bits), 82 bytes captured (656 bits) on interface 0</text><path d="M7 330 L12.2 334.5 L7 339 Z" fill="#333333"/><text x="23.0" y="338" font-family='"Liberation Mono", monospace' font-size="12" fill="#000000" xml:space="preserve">Ethernet II, Src: CadmusCo_8e:62:9e (08:00:27:8e:62:9e), Dst: RealtekU_12:35:02 (52:54:00:12:35:02)</text><path d="M7 344 L12.2 348.5 L7 353 Z" fill="#333333"/><text x="23.0" y="352" font-family='"Liberation Mono", monospace' font-size="12" fill="#000000" xml:space="preserve">Internet Protocol Version 4, Src: 10.0.2.15, Dst: 75.75.75.75</text><path d="M7 358 L12.2 362.5 L7 367 Z" fill="#333333"/><text x="23.0" y="366" font-family='"Liberation Mono", monospace' font-size="12" fill="#000000" xml:space="preserve">User Datagram Protocol, Src Port: 3971 (3971), Dst Port: 53 (53)</text><path d="M7 372 L12.2 376.5 L7 381 Z" fill="#333333"/><text x="23.0" y="380" font-family='"Liberation Mono", monospace' font-size="12" fill="#000000" xml:space="preserve">Domain Name System (query)</text><rect x="0" y="399" width="1194" height="1" fill="#aca9a3" /><rect x="0" y="400" width="1194" height="4" fill="#f0eeeb" /><rect x="590" y="401" width="1" height="1" fill="#a9a6a0" /><rect x="593" y="401" width="1" height="1" fill="#a9a6a0" /><rect x="596" y="401" width="1" height="1" fill="#a9a6a0" /><rect x="599" y="401" width="1" height="1" fill="#a9a6a0" /><rect x="602" y="401" width="1" height="1" fill="#a9a6a0" /><rect x="605" y="401" width="1" height="1" fill="#a9a6a0" /><rect x="0" y="404" width="1194" height="1" fill="#aca9a3" /><rect x="0" y="405" width="1193" height="105" fill="#ffffff" /><rect x="1193" y="404" width="1" height="107" fill="#aca9a3" /><rect x="0" y="405" width="42" height="105" fill="#edebe8" /><text x="7.4" y="415" font-family='"Liberation Mono", monospace' font-size="12" fill="#959595" xml:space="preserve">0000</text><text x="49" y="415" font-family='"Liberation Mono", monospace' font-size="12" fill="#000000" xml:space="preserve">52 54 00 12 35 02 08 00  27 8e 62 9e 08 00 45 00</text><text x="415" y="415" font-family='"Liberation Mono", monospace' font-size="12" fill="#000000" xml:space="preserve">RT..5... &#x27;.b...E.</text><text x="7.4" y="429" font-family='"Liberation Mono", monospace' font-size="12" fill="#959595" xml:space="preserve">0010</text><text x="49" y="429" font-family='"Liberation Mono", monospace' font-size="12" fill="#000000" xml:space="preserve">00 44 00 cb 40 00 40 11  97 39 0a 00 02 0f 4b 4b</text><text x="415" y="429" font-family='"Liberation Mono", monospace' font-size="12" fill="#000000" xml:space="preserve">.D..@.@. .9....KK</text><text x="7.4" y="443" font-family='"Liberation Mono", monospace' font-size="12" fill="#959595" xml:space="preserve">0020</text><text x="49" y="443" font-family='"Liberation Mono", monospace' font-size="12" fill="#000000" xml:space="preserve">4b 4b 0f 83 00 35 00 30  a2 e6 c9 17 01 00 00 01</text><text x="415" y="443" font-family='"Liberation Mono", monospace' font-size="12" fill="#000000" xml:space="preserve">KK...5.0 ........</text><text x="7.4" y="457" font-family='"Liberation Mono", monospace' font-size="12" fill="#959595" xml:space="preserve">0030</text><text x="49" y="457" font-family='"Liberation Mono", monospace' font-size="12" fill="#000000" xml:space="preserve">00 00 00 00 00 00 01 30  01 31 03 31 34 34 01 30</text><text x="415" y="457" font-family='"Liberation Mono", monospace' font-size="12" fill="#000000" xml:space="preserve">.......0 .1.144.0</text><text x="7.4" y="471" font-family='"Liberation Mono", monospace' font-size="12" fill="#959595" xml:space="preserve">0040</text><text x="49" y="471" font-family='"Liberation Mono", monospace' font-size="12" fill="#000000" xml:space="preserve">07 69 6e 2d 61 64 64 72  04 61 72 70 61 00 00 0c</text><text x="415" y="471" font-family='"Liberation Mono", monospace' font-size="12" fill="#000000" xml:space="preserve">.in-addr .arpa...</text><text x="7.4" y="485" font-family='"Liberation Mono", monospace' font-size="12" fill="#959595" xml:space="preserve">0050</text><text x="49" y="485" font-family='"Liberation Mono", monospace' font-size="12" fill="#000000" xml:space="preserve">00 01</text><text x="415" y="485" font-family='"Liberation Mono", monospace' font-size="12" fill="#000000" xml:space="preserve">..</text><rect x="0" y="510" width="1194" height="1" fill="#aca9a3" /><rect x="0" y="511" width="1194" height="22" fill="#f0eeeb" /><rect x="42" y="533" width="1152" height="1" fill="#ffffff" /><circle cx="15.8" cy="521.8" r="6.4" fill="url(#redg)" stroke="#8f2a2a" stroke-width="1"/><rect x="32.5" y="515.5" width="12" height="13" fill="#f4f5f2" stroke="#a9aba8" stroke-width="0.9"/><path d="M33 516 h6 c-0.6 1.6 -1.6 2.6 -3.2 3 l-2.8 1.4 z" fill="#4f94dc"/><path d="M35 521.5 h3 M35 524 h2 M35 526.5 h6" stroke="#c5c8c4" stroke-width="0.8"/><path d="M37.3 526.3 L45.2 516.6" stroke="#3c3c3c" stroke-width="2.6" stroke-linecap="round"/><path d="M36.2 527.6 L37.3 525 L38.8 526.4 Z" fill="#202020"/><text x="61" y="526.6" font-family='"Liberation Sans", sans-serif' font-size="12.5" fill="#121212" stroke="#121212" stroke-width="0.1" textLength="319.9" lengthAdjust="spacing" >wireshark_pcapng_enp0s3_20160922121504_7ASl4b</text><rect x="749" y="516.0" width="1" height="1" fill="#b0ada7" /><rect x="749" y="518.6" width="1" height="1" fill="#b0ada7" /><rect x="749" y="521.2" width="1" height="1" fill="#b0ada7" /><rect x="749" y="523.8" width="1" height="1" fill="#b0ada7" /><rect x="749" y="526.4" width="1" height="1" fill="#b0ada7" /><rect x="749" y="529.0" width="1" height="1" fill="#b0ada7" /><text x="761" y="526.6" font-family='"Liberation Sans", sans-serif' font-size="12.5" fill="#121212" stroke="#121212" stroke-width="0.1" textLength="221.5" lengthAdjust="spacing" >Packets: 11 · Displayed: 11 (100.0%)</text><rect x="1064" y="516.0" width="1" height="1" fill="#b0ada7" /><rect x="1064" y="518.6" width="1" height="1" fill="#b0ada7" /><rect x="1064" y="521.2" width="1" height="1" fill="#b0ada7" /><rect x="1064" y="523.8" width="1" height="1" fill="#b0ada7" /><rect x="1064" y="526.4" width="1" height="1" fill="#b0ada7" /><rect x="1064" y="529.0" width="1" height="1" fill="#b0ada7" /><text x="1074.7" y="526.6" font-family='"Liberation Sans", sans-serif' font-size="12.5" fill="#121212" stroke="#121212" stroke-width="0.1" textLength="89.0" lengthAdjust="spacing" >Profile: Default</text><rect x="1190" y="530" width="1" height="1" fill="#b0ada7" /><rect x="1187" y="530" width="1" height="1" fill="#b0ada7" /><rect x="1184" y="530" width="1" height="1" fill="#b0ada7" /><rect x="1190" y="527" width="1" height="1" fill="#b0ada7" /><rect x="1187" y="527" width="1" height="1" fill="#b0ada7" /><rect x="1190" y="524" width="1" height="1" fill="#b0ada7" /></svg></body></html>
